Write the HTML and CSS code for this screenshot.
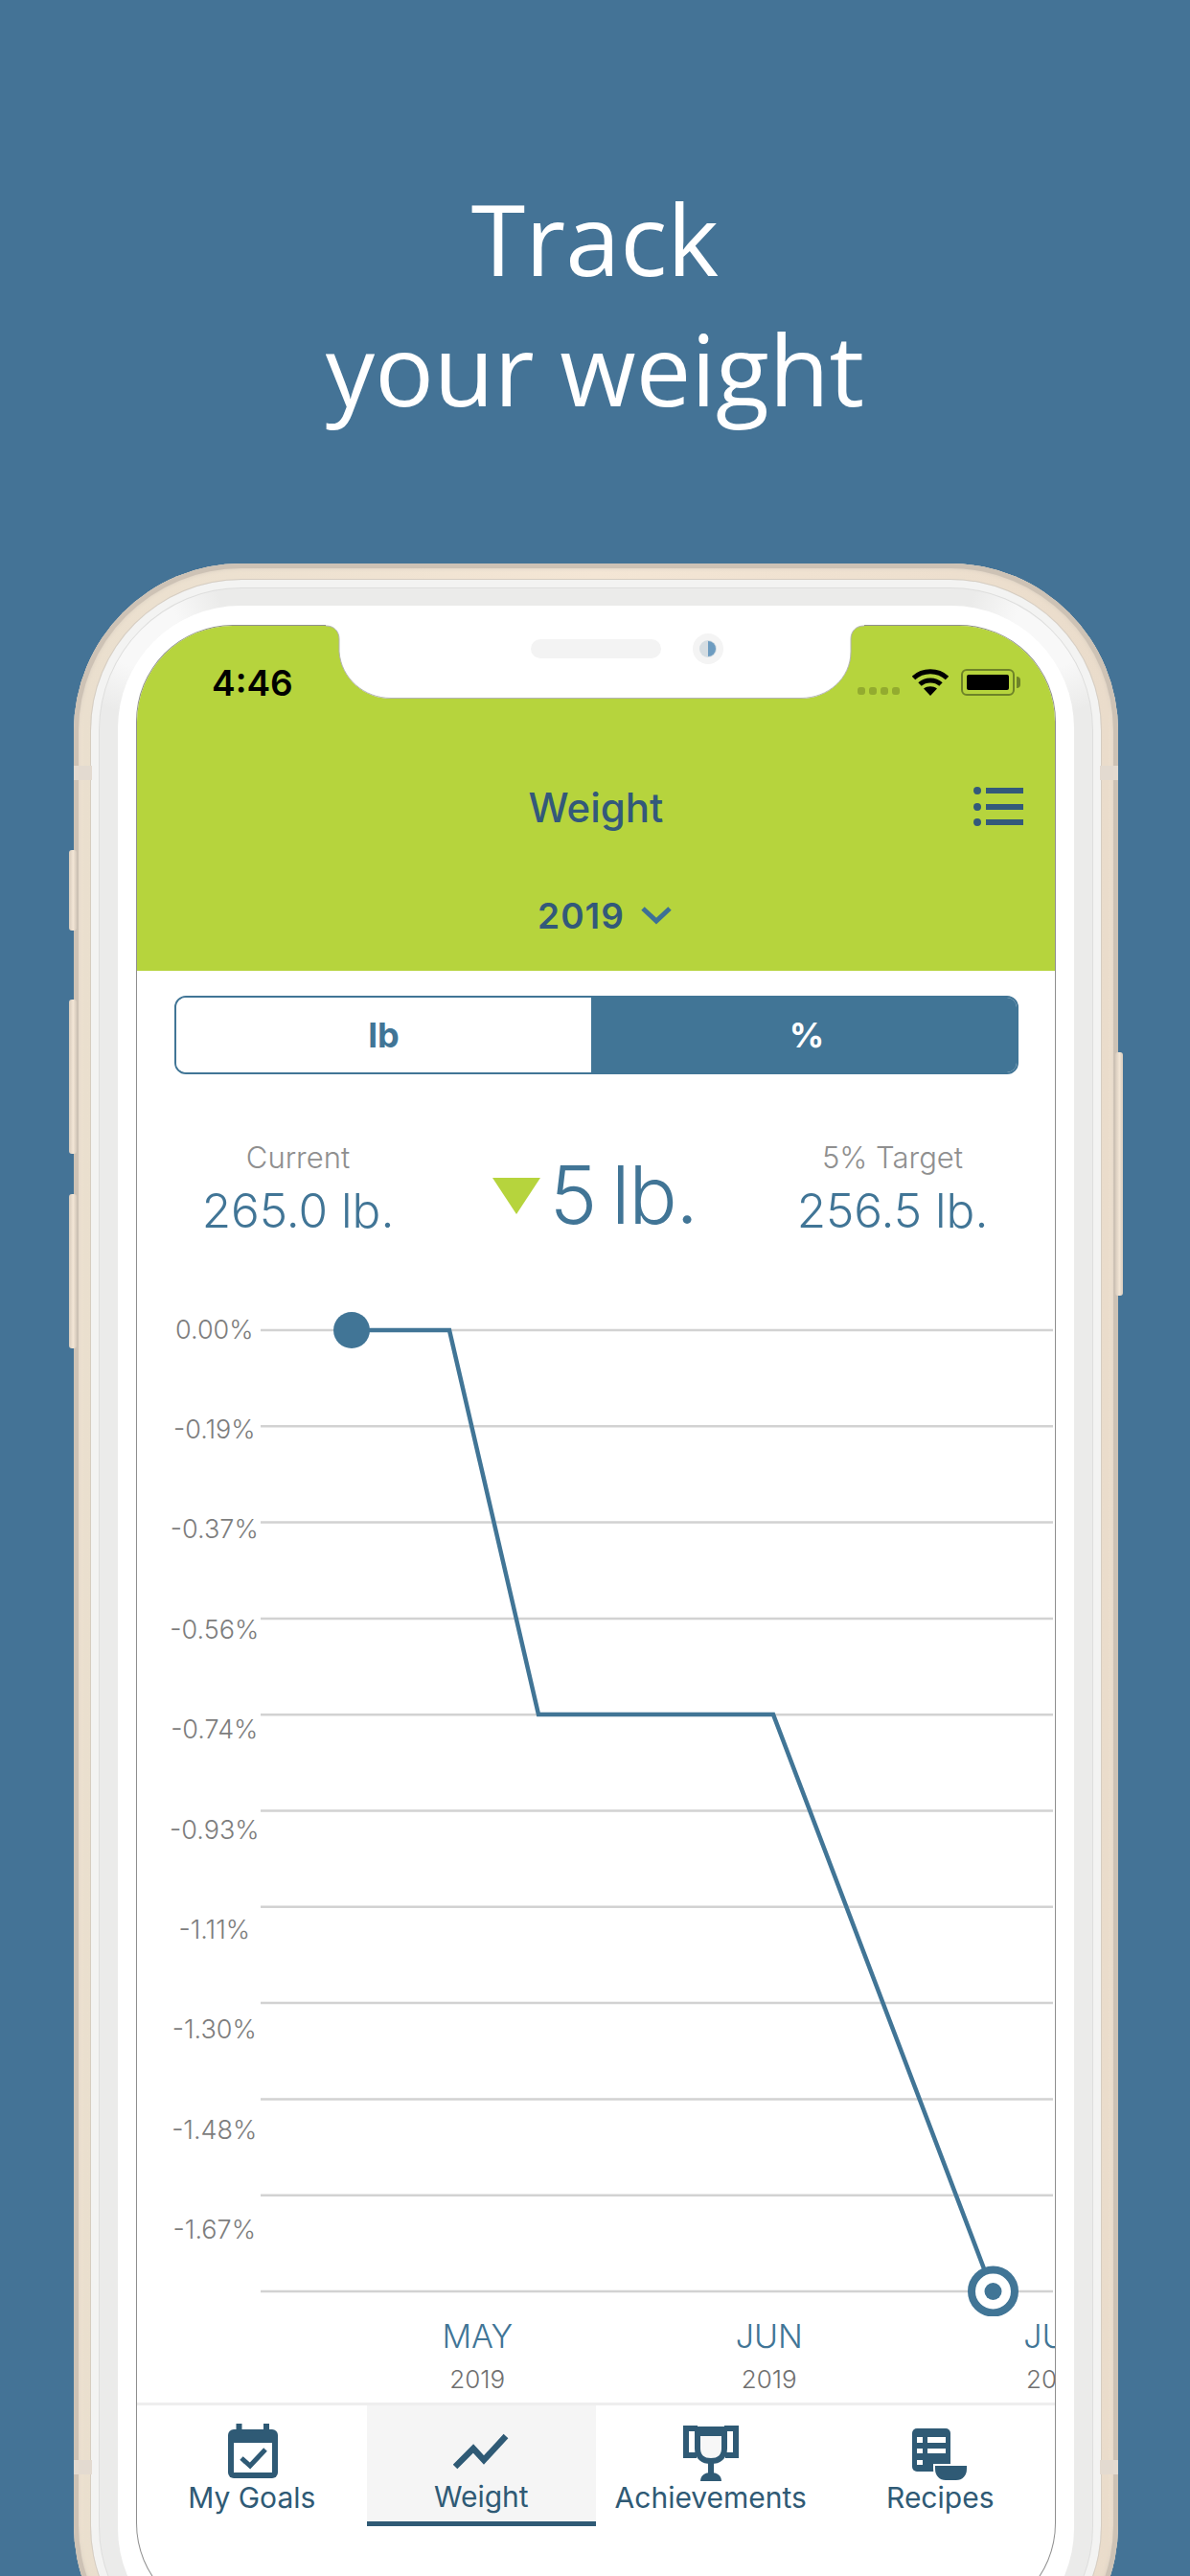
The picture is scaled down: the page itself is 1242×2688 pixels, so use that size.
FILE: index.html
```html
<!DOCTYPE html>
<html lang="en">
<head>
<meta charset="utf-8">
<title>Track your weight</title>
<link rel="stylesheet" href="styles.css">
</head>
<body>
<header class="hero">
  <h1 class="hero-title">Track<br>your weight</h1>
</header>
<div class="device">
  <span class="hw hw-silent"></span>
  <span class="hw hw-vol-up"></span>
  <span class="hw hw-vol-down"></span>
  <span class="hw hw-power"></span>
  <span class="band band-l1"></span>
  <span class="band band-r1"></span>
  <span class="band band-l2"></span>
  <span class="band band-r2"></span>
  <div class="bezel">
    <div class="glass">
      <div class="screen">
        <section class="appbar">
          <div class="status">
            <span class="time">4:46</span>
            <div class="status-icons">
              <div class="signal"><i></i><i></i><i></i><i></i></div>
              <svg class="wifi" width="38" height="28" viewBox="0 0 38 28">
                <path d="M1.5 9.5C11 0.5 27 0.5 36.5 9.5" fill="none" stroke="#000" stroke-width="5"/>
                <path d="M8 16C14 10.500 24 10.500 30 16" fill="none" stroke="#000" stroke-width="5"/>
                <path d="M19 28L12 20.500C16 17.500 22 17.500 26 20.500Z" fill="#000"/>
              </svg>
              <div class="battery"><span class="battery-fill"></span></div>
              <span class="battery-nub"></span>
            </div>
          </div>
          <div class="navrow">
            <span></span>
            <h2 class="nav-title">Weight</h2>
            <svg class="menu-icon" width="52" height="44" viewBox="0 0 52 44">
              <circle cx="4" cy="5" r="4" fill="#33597a"/>
              <circle cx="4" cy="22" r="4" fill="#33597a"/>
              <circle cx="4" cy="38" r="4" fill="#33597a"/>
              <rect x="13" y="2" width="39" height="6" fill="#33597a"/>
              <rect x="13" y="19" width="39" height="6" fill="#33597a"/>
              <rect x="13" y="35" width="39" height="6" fill="#33597a"/>
            </svg>
          </div>
          <div class="yearrow">
            <span class="year">2019</span>
            <svg class="chevron" width="32" height="20" viewBox="0 0 32 20">
              <path d="M2 3L16 16L30 3" fill="none" stroke="#3d7096" stroke-width="5"/>
            </svg>
          </div>
        </section>

        <div class="segment">
          <div class="seg seg-off">lb</div>
          <div class="seg seg-on">%</div>
        </div>

        <div class="stats">
          <div class="stat">
            <div class="stat-label">Current</div>
            <div class="stat-value">265.0 lb.</div>
          </div>
          <div class="delta">
            <span class="delta-arrow"></span>
            <span class="delta-value">5 lb.</span>
          </div>
          <div class="stat">
            <div class="stat-label">5% Target</div>
            <div class="stat-value">256.5 lb.</div>
          </div>
        </div>

        <div class="chart">
          <div class="yaxis">
            <span>0.00%</span>
            <span>-0.19%</span>
            <span>-0.37%</span>
            <span>-0.56%</span>
            <span>-0.74%</span>
            <span>-0.93%</span>
            <span>-1.11%</span>
            <span>-1.30%</span>
            <span>-1.48%</span>
            <span>-1.67%</span>
          </div>
          <svg class="plot" width="827" height="1082" viewBox="0 0 827 1082">
            <g stroke="#d2d2d2" stroke-width="2.500">
              <path d="M0 53H827"/><path d="M0 153.300H827"/><path d="M0 253.600H827"/><path d="M0 353.900H827"/>
              <path d="M0 454.200H827"/><path d="M0 554.500H827"/><path d="M0 654.800H827"/><path d="M0 755.100H827"/>
              <path d="M0 855.400H827"/><path d="M0 955.700H827"/><path d="M0 1056H827"/>
            </g>
            <path d="M95 53H197L290 454H535L764 1056" fill="none" stroke="#417596" stroke-width="4.500" stroke-linejoin="miter"/>
            <circle cx="95" cy="53" r="19" fill="#417596"/>
            <circle cx="764.500" cy="1056" r="22.500" fill="#fff" stroke="#417596" stroke-width="8"/>
            <circle cx="764.500" cy="1056" r="9" fill="#417596"/>
          </svg>
        </div>

        <div class="xaxis">
          <div class="xcell"><div class="x-month">MAY</div><div class="x-year">2019</div></div>
          <div class="xcell"><div class="x-month">JUN</div><div class="x-year">2019</div></div>
          <div class="xcell xcell-last"><div class="x-month">JUL</div><div class="x-year">2019</div></div>
        </div>

        <nav class="tabs">
          <div class="tab">
            <svg class="tab-icon" width="58" height="60" viewBox="0 0 58 60">
              <rect x="12.500" y="0" width="6" height="10" fill="#2f5a75"/>
              <rect x="41" y="0" width="6" height="10" fill="#2f5a75"/>
              <rect x="4" y="6" width="52" height="51" rx="6" fill="#2f5a75"/>
              <rect x="10" y="20" width="40" height="31" fill="#fff"/>
              <path d="M18 36L27 44L43 27" fill="none" stroke="#2f5a75" stroke-width="5"/>
            </svg>
            <span class="tab-label">My Goals</span>
          </div>
          <div class="tab tab-active">
            <svg class="tab-icon" width="58" height="60" viewBox="0 0 58 60">
              <path d="M2 45L21 26L32 38L55 13" fill="none" stroke="#2f5a75" stroke-width="6.500"/>
            </svg>
            <span class="tab-label">Weight</span>
          </div>
          <div class="tab">
            <svg class="tab-icon" width="58" height="60" viewBox="0 0 58 60">
              <path d="M15 5H3V33H14M43 5H55V33H44" fill="none" stroke="#2f5a75" stroke-width="6"/>
              <path d="M15 10H43V26C43 35 37 39 29 39C21 39 15 35 15 26Z" fill="#f7f7f7" stroke="#2f5a75" stroke-width="6"/>
              <path d="M12 3H46V13H12Z" fill="#2f5a75"/>
              <rect x="26" y="40" width="6" height="12" fill="#2f5a75"/>
              <path d="M18 60C18 54 23 51 29 51C35 51 40 54 40 60Z" fill="#2f5a75"/>
            </svg>
            <span class="tab-label">Achievements</span>
          </div>
          <div class="tab">
            <svg class="tab-icon" width="58" height="60" viewBox="0 0 58 60">
              <rect x="0" y="5" width="40" height="45" rx="5" fill="#2f5a75"/>
              <g fill="#fff">
                <rect x="5" y="14" width="6" height="6"/>
                <rect x="16" y="14" width="19" height="6"/>
                <rect x="5" y="26" width="6" height="5"/>
                <rect x="16" y="26" width="19" height="5"/>
                <rect x="5" y="38" width="6" height="5"/>
              </g>
              <path d="M23 43H58V47C58 55 53 60 46 60H35C28 60 23 55 23 47Z" fill="#2f5a75" stroke="#fff" stroke-width="2"/>
            </svg>
            <span class="tab-label">Recipes</span>
          </div>
        </nav>
      </div>
      <svg class="notch" width="562" height="78" viewBox="0 -2 562 78">
        <path d="M0 -2V0C9 0 14 6 14 14V27C16 55 40 76 68 76H496C524 76 548 55 548 27V14C548 6 553 0 562 0V-2Z" fill="#fff"/>
        <path d="M0 0C9 0 14 6 14 14V27C16 55 40 75.500 68 75.500H496C524 75.500 548 55 548 27V14C548 6 553 0 562 0" fill="none" stroke="#b4b4b4" stroke-width="1"/>
        <rect x="214" y="14" width="136" height="20" rx="10" fill="#f3f3f3"/>
        <circle cx="399" cy="24" r="16" fill="#f4f4f4"/>
        <circle cx="399" cy="24" r="9" fill="#d5dde2"/>
        <path d="M399 16a8 8 0 0 1 0 16z" fill="#6d9cc0"/>
      </svg>
    </div>
  </div>
</div>
</body>
</html>
```
FILE: styles.css
```css
* { box-sizing: border-box; }
html, body { margin: 0; padding: 0; }
body {
  width: 1242px;
  height: 2688px;
  overflow: hidden;
  background: #447396;
  font-family: Inter, "Liberation Sans", sans-serif;
}

/* headline */
.hero {
  height: 588px;
  padding-top: 180px;
  text-align: center;
}
.hero-title {
  margin: 0;
  font-family: "Open Sans", sans-serif;
  font-size: 102.500px;
  line-height: 136px;
  font-weight: 400;
  color: #fff;
}

/* device shell */
.device {
  position: relative;
  width: 1090px;
  height: 2222px;
  margin-left: 77px;
  padding: 17px 18px;
  border-radius: 175px;
  background: linear-gradient(90deg, #f5e7d6 0%, #eadfce 1%, #f4e6d5 50%, #eadccb 99%, #f5e7d6 100%);
  box-shadow: inset 0 0 0 5px #cdc2b5, inset 0 0 4px 5px #d9cfc2;
}
.bezel {
  height: 100%;
  padding: 27px 28px;
  border-radius: 157px;
  background-color: #ebebea;
  background-image:
    radial-gradient(circle 90px at 50px 50px, #f8f8f8 45%, transparent),
    radial-gradient(circle 90px at calc(100% - 50px) 50px, #f8f8f8 45%, transparent);
  box-shadow: 0 0 0 1px #d6cdc1, inset 0 0 0 8px #f3f3f2, inset 0 0 0 9px #dededd;
}
.glass {
  position: relative;
  height: 100%;
  padding: 21px 20px;
  border-radius: 128px;
  background: #fff;
}
.screen {
  display: flex;
  flex-direction: column;
  height: 2080px;
  border-radius: 100px;
  overflow: hidden;
  background: #fff;
  box-shadow: 0 0 0 1px #8f8f8f;
}

/* hardware details */
.hw {
  position: absolute;
  width: 8px;
  border-radius: 3px;
  background: linear-gradient(90deg, #d6cabc, #f3e6d6 55%, #d6cabc);
}
.hw-silent { left: -5px; top: 299px; height: 84px; }
.hw-vol-up { left: -5px; top: 455px; height: 161px; }
.hw-vol-down { left: -5px; top: 658px; height: 161px; }
.hw-power { right: -5px; top: 510px; height: 254px; }
.band {
  position: absolute;
  width: 19px;
  height: 15px;
  background: #e3dad0;
}
.band-l1 { left: 0; top: 211px; }
.band-r1 { right: 0; top: 211px; }
.band-l2 { left: 0; top: 1979px; }
.band-r2 { right: 0; top: 1979px; }

/* notch */
.notch {
  position: absolute;
  left: 217px;
  top: 19px;
}

/* green app bar */
.appbar {
  flex: none;
  height: 360px;
  background: #b6d43d;
}
.status {
  display: flex;
  align-items: center;
  justify-content: space-between;
  height: 118px;
  padding: 0 36px 0 78px;
}
.time {
  font-size: 37px;
  font-weight: 600;
  color: #000;
}
.status-icons {
  display: flex;
  align-items: center;
}
.signal {
  display: flex;
  gap: 4px;
  align-self: flex-end;
  margin-bottom: 1px;
  margin-right: 13px;
}
.signal i {
  width: 8px;
  height: 8px;
  border-radius: 3px;
  background: #93ab2f;
}
.wifi { margin-right: 13px; }
.battery {
  width: 56px;
  height: 28px;
  padding: 4px;
  border: 2.500px solid #6e8328;
  border-radius: 6px;
}
.battery-fill {
  display: block;
  height: 100%;
  border-radius: 2px;
  background: #000;
}
.battery-nub {
  width: 4px;
  height: 12px;
  margin-left: 2px;
  border-radius: 0 4px 4px 0;
  background: #6e8328;
}
.navrow {
  display: grid;
  grid-template-columns: 1fr auto 1fr;
  align-items: center;
  height: 76px;
  margin-top: 33px;
  padding: 0 33px;
}
.nav-title {
  margin: 0;
  font-size: 42px;
  font-weight: 500;
  color: #33597a;
}
.menu-icon { justify-self: end; }
.yearrow {
  display: flex;
  align-items: center;
  justify-content: center;
  gap: 17px;
  height: 60px;
  margin-top: 45px;
  padding-left: 18px;
}
.year {
  font-size: 37px;
  font-weight: 600;
  letter-spacing: 1px;
  color: #33597a;
}

/* unit toggle */
.segment {
  flex: none;
  display: flex;
  height: 82px;
  margin: 26px 38px 0 39px;
  border: 2.500px solid #417596;
  border-radius: 12px;
  overflow: hidden;
}
.seg {
  display: flex;
  align-items: center;
  justify-content: center;
  font-size: 36px;
  font-weight: 700;
}
.seg-off { width: 433px; color: #417596; background: #fff; }
.seg-on { flex: 1; padding-left: 6px; color: #fff; background: #417596; }

/* stats */
.stats {
  flex: none;
  display: grid;
  grid-template-columns: 336px 1fr 339px;
  align-items: start;
  height: 214px;
  padding-top: 67px;
}
.stat { text-align: center; }
.stat-label {
  font-size: 31px;
  line-height: 40px;
  font-weight: 300;
  color: #8f8f8f;
}
.stat-value {
  margin-top: 4px;
  font-size: 49.500px;
  line-height: 62px;
  font-weight: 300;
  color: #417596;
}
.delta {
  display: flex;
  align-items: center;
  justify-content: center;
  gap: 10px;
  height: 100px;
  margin-top: 6px;
}
.delta-arrow {
  width: 0;
  height: 0;
  margin-top: 8px;
  border-left: 25.500px solid transparent;
  border-right: 25.500px solid transparent;
  border-top: 38px solid #b6d43d;
}
.delta-value {
  margin-top: 6px;
  font-size: 84px;
  line-height: 100px;
  font-weight: 300;
  letter-spacing: -1.500px;
  word-spacing: -6px;
  color: #417596;
}

/* chart */
.chart {
  flex: none;
  display: flex;
  height: 1082px;
}
.yaxis {
  flex: none;
  width: 129px;
  padding: 0 13px 0 34px;
  display: grid;
  grid-auto-rows: 104.400px;
}
.yaxis span {
  display: flex;
  align-items: center;
  justify-content: center;
  white-space: nowrap;
  font-size: 27px;
  font-weight: 300;
  color: #7d7d7d;
}
.plot { flex: none; display: block; }

/* months */
.xaxis {
  flex: none;
  display: flex;
  height: 90px;
  padding-left: 203px;
  overflow: hidden;
}
.xcell {
  flex: none;
  width: 304.500px;
  text-align: center;
}
.xcell-last { width: 290px; }
.x-month {
  font-size: 34px;
  line-height: 42px;
  font-weight: 300;
  color: #417596;
}
.x-year {
  font-size: 26px;
  line-height: 48px;
  font-weight: 300;
  color: #707070;
}

/* tab bar */
.tabs {
  flex: none;
  display: grid;
  grid-template-columns: repeat(4, 1fr);
  border-top: 3px solid #eeeeee;
}
.tab {
  display: flex;
  flex-direction: column;
  align-items: center;
  height: 126px;
  padding-top: 19px;
}
.tab-active {
  border-bottom: 5px solid #2f5a75;
  background: #f5f5f5;
}
.tab-icon { flex: none; display: block; }
.tab-label {
  margin-top: -3px;
  font-size: 30px;
  line-height: 40px;
  font-weight: 400;
  color: #2f5a75;
  white-space: nowrap;
}
.tab-active .tab-label { margin-top: -4px; }
```
